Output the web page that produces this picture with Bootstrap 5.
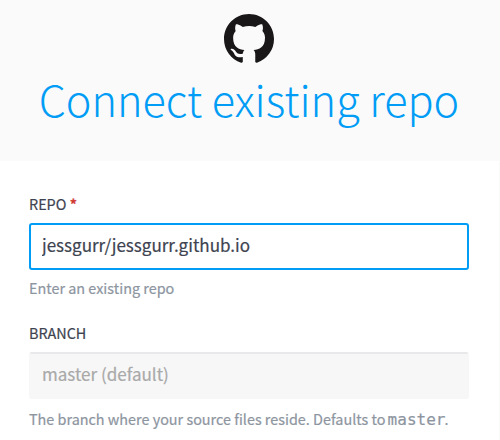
<!DOCTYPE html>
<html lang="en">
<head>
<meta charset="utf-8">
<meta name="viewport" content="width=device-width, initial-scale=1">
<title>Connect existing repo</title>
<link rel="stylesheet" href="https://cdn.jsdelivr.net/npm/bootstrap@5.3.0/dist/css/bootstrap.min.css">
<style>
body { font-family: "Source Sans Pro", "Noto Sans CJK SC", sans-serif; background: #fafafa; color: #3d4350; overflow: hidden; }
.page-head { height: 161px; padding: 14px 2px 0 0; }
.page-head svg { width: 50px; height: 50px; fill: #191717; }
.page-title { font-size: 43.2px; font-weight: 300; line-height: 60px; margin-top: 4px; color: #009cf5; white-space: nowrap; }
.repo-form { width: 499px; height: 279px; padding: 33px 30px 0 29px; -webkit-text-stroke: 0.2px; }
.field-label { font-size: 14.4px; line-height: 20px; margin-bottom: 9px; }
.req { color: #d03a33; font-weight: 700; }
.field-box { height: 47px; font-size: 17.05px; line-height: 24px; padding: 0 11px 5px; border: 2px solid #009cf5; border-radius: 3px; box-shadow: none; color: #3d4350; background: #fff; }
.field-box:focus { border-color: #009cf5; box-shadow: none; color: #3d4350; }
.field-box.field-muted { background: #f7f7f7; border-color: #e9e9ec transparent transparent; }
.field-box.field-muted::placeholder { color: #a9a9a9; opacity: 1; }
.field-help { font-size: 14.4px; line-height: 20px; margin-top: 8px; margin-bottom: 1px; color: #8d959f; white-space: nowrap; }
.branch-help { margin-top: 10px; }
.field-help code { font-family: "DejaVu Sans Mono", monospace; font-size: 16px; line-height: 1; margin: 0 -1px; color: inherit; }
</style>
<script src="https://cdn.jsdelivr.net/npm/bootstrap@5.3.0/dist/js/bootstrap.bundle.min.js"></script>
</head>
<body>
<header class="page-head text-center">
  <svg class="d-block mx-auto" viewBox="0 0 16 16" role="img" aria-label="GitHub"><path fill-rule="evenodd" d="M8 0C3.58 0 0 3.58 0 8c0 3.54 2.29 6.53 5.47 7.59.4.07.55-.17.55-.38 0-.19-.01-.82-.01-1.49-2.01.37-2.53-.49-2.69-.94-.09-.23-.48-.94-.82-1.13-.28-.15-.68-.52-.01-.53.63-.01 1.08.58 1.23.82.72 1.21 1.87.87 2.33.66.07-.52.28-.87.51-1.07-1.78-.2-3.64-.89-3.64-3.95 0-.87.31-1.59.82-2.15-.08-.2-.36-1.02.08-2.12 0 0 .67-.21 2.2.82.64-.18 1.32-.27 2-.27s1.36.09 2 .27c1.53-1.04 2.2-.82 2.2-.82.44 1.1.16 1.92.08 2.12.51.56.82 1.27.82 2.15 0 3.07-1.87 3.75-3.65 3.95.29.25.54.73.54 1.48 0 1.07-.01 1.93-.01 2.2 0 .21.15.46.55.38A8.01 8.01 0 0 0 16 8c0-4.42-3.58-8-8-8z"/></svg>
  <h1 class="page-title mb-0">Connect existing repo</h1>
</header>
<main>
  <form class="repo-form bg-white">
    <div>
      <label class="field-label d-block" for="repo">REPO <span class="req">*</span></label>
      <input class="form-control field-box" id="repo" type="text" value="jessgurr/jessgurr.github.io" spellcheck="false">
      <div class="field-help">Enter an existing repo</div>
    </div>
    <div class="pt-4">
      <label class="field-label d-block" for="branch">BRANCH</label>
      <input class="form-control field-box field-muted" id="branch" type="text" placeholder="master (default)">
      <div class="field-help branch-help">The branch where your source files reside. Defaults to <code>master</code>.</div>
    </div>
  </form>
</main>
</body>
</html>
